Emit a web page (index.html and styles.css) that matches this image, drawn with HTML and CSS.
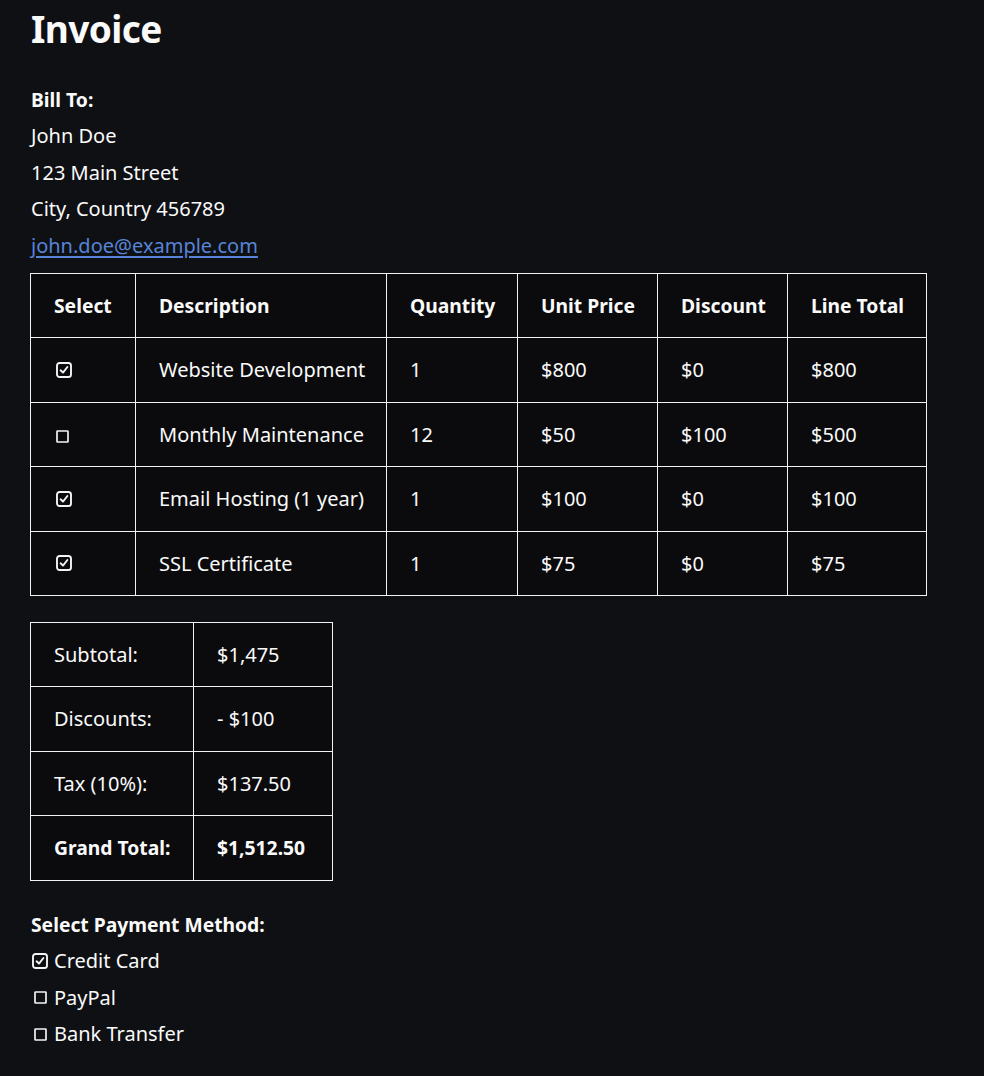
FILE: index.html
```html
<!DOCTYPE html>
<html lang="en">
<head>
<meta charset="utf-8">
<title>Invoice</title>
<link rel="stylesheet" href="styles.css">
</head>
<body>
<main class="page">
  <h1 class="title">Invoice</h1>
  <section class="bill">
    <div class="line strong">Bill To:</div>
    <div class="line">John Doe</div>
    <div class="line">123 Main Street</div>
    <div class="line">City, Country 456789</div>
    <div class="line"><a class="link" href="#">john.doe@example.com</a></div>
  </section>

  <table class="grid items">
    <colgroup>
      <col class="c-sel"><col class="c-desc"><col class="c-qty"><col class="c-price"><col class="c-disc"><col class="c-total">
    </colgroup>
    <thead>
      <tr><th>Select</th><th>Description</th><th>Quantity</th><th>Unit Price</th><th>Discount</th><th>Line Total</th></tr>
    </thead>
    <tbody>
      <tr>
        <td><svg class="cb on" viewBox="0 0 16 16"><rect x="1" y="1" width="14" height="14" rx="2.6"/><path d="M4.6 8.3 L7 10.6 L11.4 5"/></svg></td>
        <td>Website Development</td><td>1</td><td>$800</td><td>$0</td><td>$800</td>
      </tr>
      <tr>
        <td><svg class="cb off" viewBox="0 0 13 13"><rect x="1" y="1" width="11" height="11" rx="0.6"/></svg></td>
        <td>Monthly Maintenance</td><td>12</td><td>$50</td><td>$100</td><td>$500</td>
      </tr>
      <tr>
        <td><svg class="cb on" viewBox="0 0 16 16"><rect x="1" y="1" width="14" height="14" rx="2.6"/><path d="M4.6 8.3 L7 10.6 L11.4 5"/></svg></td>
        <td>Email Hosting (1 year)</td><td>1</td><td>$100</td><td>$0</td><td>$100</td>
      </tr>
      <tr>
        <td><svg class="cb on" viewBox="0 0 16 16"><rect x="1" y="1" width="14" height="14" rx="2.6"/><path d="M4.6 8.3 L7 10.6 L11.4 5"/></svg></td>
        <td>SSL Certificate</td><td>1</td><td>$75</td><td>$0</td><td>$75</td>
      </tr>
    </tbody>
  </table>

  <table class="grid summary">
    <colgroup><col class="c-label"><col class="c-value"></colgroup>
    <tbody>
      <tr><td>Subtotal:</td><td>$1,475</td></tr>
      <tr><td>Discounts:</td><td>- $100</td></tr>
      <tr><td>Tax (10%):</td><td>$137.50</td></tr>
      <tr class="strong"><td>Grand Total:</td><td>$1,512.50</td></tr>
    </tbody>
  </table>

  <section class="payment">
    <div class="line strong">Select Payment Method:</div>
    <div class="line opt"><span class="box-slot"><svg class="cb on" viewBox="0 0 16 16"><rect x="1" y="1" width="14" height="14" rx="2.6"/><path d="M4.6 8.3 L7 10.6 L11.4 5"/></svg></span><span>Credit Card</span></div>
    <div class="line opt"><span class="box-slot"><svg class="cb off" viewBox="0 0 13 13"><rect x="1" y="1" width="11" height="11" rx="0.6"/></svg></span><span>PayPal</span></div>
    <div class="line opt"><span class="box-slot"><svg class="cb off" viewBox="0 0 13 13"><rect x="1" y="1" width="11" height="11" rx="0.6"/></svg></span><span>Bank Transfer</span></div>
  </section>
</main>
</body>
</html>
```

FILE: styles.css
```css
html, body {
  margin: 0;
  padding: 0;
  background: #0f1013;
}

body {
  color: #fafafa;
  font-family: "Noto Sans", "Open Sans", sans-serif;
  font-size: 20px;
}

.page {
  padding: 5px 30px 20px 30px;
}

.title {
  margin: 0 0 30px 1px;
  font-size: 37px;
  line-height: 47px;
  font-weight: 700;
  letter-spacing: -0.6px;
}

.line {
  line-height: 36.4px;
  padding-left: 1px;
}

.strong {
  font-weight: 700;
  font-size: 19.3px;
}

.link {
  color: #5784d8;
  text-decoration: underline;
  text-underline-offset: 3px;
}

.grid {
  border-collapse: collapse;
  table-layout: fixed;
  background: #0b0b0d;
}

.grid th,
.grid td {
  border: 1px solid #f2f2f2;
  padding: 20px 0 20px 23px;
  line-height: 23.4px;
  height: 23.4px;
  text-align: left;
  white-space: nowrap;
  vertical-align: middle;
}

.grid th {
  font-weight: 700;
  font-size: 19.3px;
}

.items {
  margin-top: 9px;
  width: 896px;
}

.c-sel { width: 105px; }
.c-desc { width: 251px; }
.c-qty { width: 131px; }
.c-price { width: 140px; }
.c-disc { width: 130px; }
.c-total { width: 139px; }

.summary {
  margin-top: 26px;
  width: 302px;
}

.c-label { width: 163px; }
.c-value { width: 139px; }

.cb {
  display: inline-block;
  vertical-align: middle;
  fill: none;
  stroke: #f4f4f4;
}

.cb.on {
  width: 16px;
  height: 16px;
  stroke-width: 1.9;
  stroke-linecap: round;
  stroke-linejoin: round;
}

.cb.off {
  width: 13px;
  height: 13px;
  stroke-width: 1.7;
}

.grid td .cb {
  margin-left: 2px;
  margin-top: -2px;
  margin-bottom: 2px;
}

.grid td .cb.off {
  margin-top: 0;
  margin-bottom: 0;
}

.payment {
  margin-top: 26px;
}

.opt {
  display: flex;
  align-items: center;
  gap: 6px;
}

.box-slot {
  display: inline-flex;
  width: 16px;
  margin-left: 1px;
  justify-content: center;
}
```
